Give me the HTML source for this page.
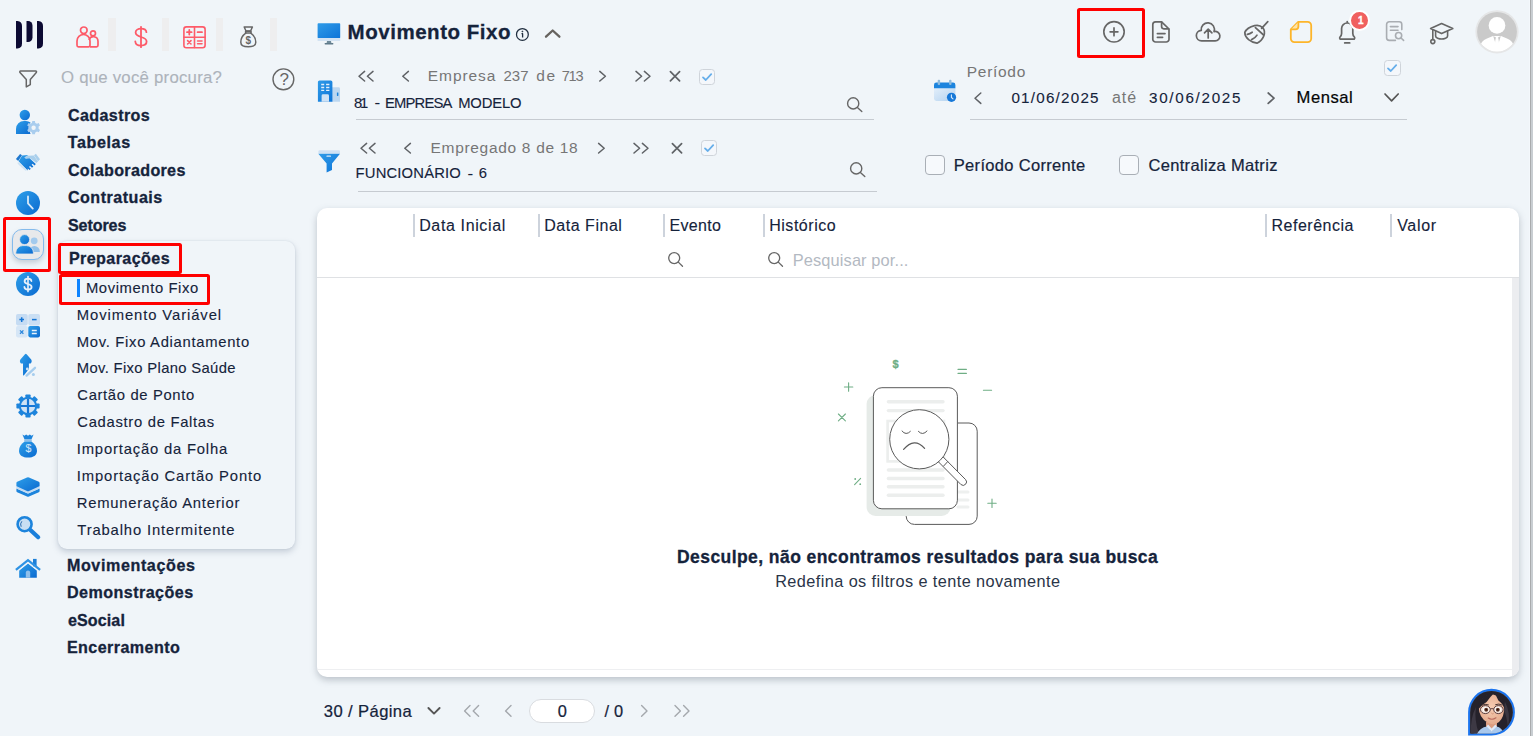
<!DOCTYPE html>
<html lang="pt-BR"><head>
<meta charset="utf-8">
<title>Movimento Fixo</title>
<style>
*{box-sizing:border-box;margin:0;padding:0}
html,body{width:1533px;height:736px;overflow:hidden}
body{background:#f0f5f9;font-family:"Liberation Sans",sans-serif;color:#15233b;position:relative}
.abs{position:absolute}
.t{position:absolute;white-space:nowrap;line-height:1;-webkit-text-stroke:0.12px currentColor}
.b{font-weight:700;-webkit-text-stroke:0.3px currentColor}
.navy{color:#15233b}
.grey{color:#767676;-webkit-text-stroke:0}
.ph{color:#adb3bb}
.m{-webkit-text-stroke:0.22px currentColor}
svg{position:absolute;overflow:visible}
.redbox{position:absolute;border:3px solid #ff0000;border-radius:2.5px}
.uline{position:absolute;height:1px;background:#c6cbd1}
.cb{position:absolute;width:16.6px;height:16.4px;border:1px solid #cfd4da;border-radius:3.5px;background:#f4f7fb}
.cb2{position:absolute;width:20px;height:20px;border:1px solid #a9afb6;border-radius:4px;background:#f6f9fc}
.sep{position:absolute;width:2px;height:23px;top:214px;background:#cdd3dc}
</style>
</head>
<body>
<!-- ===== logo ===== -->
<svg style="left:16px;top:21px" width="28" height="28" viewBox="0 0 28 28">
  <path d="M0 0 H1.5 A5 5 0 0 1 6 5 V22.5 A5 5 0 0 1 1.5 27.5 H0 Z" fill="#0c0a33"></path>
  <path d="M10.5 0 H12 A4.5 4.5 0 0 1 16.5 4.5 V16.5 A4.5 4.5 0 0 1 12 21 H10.5 Z" fill="#0c0a33"></path>
  <path d="M21 0 H22.5 A5 5 0 0 1 27 5 V22.5 A5 5 0 0 1 22.5 27.5 H21 Z" fill="#0c0a33"></path>
</svg>

<!-- ===== top module icons ===== -->
<div class="abs" style="left:108px;top:18px;width:8px;height:33px;background:#eeeeef"></div>
<div class="abs" style="left:162px;top:18px;width:7px;height:33px;background:#eeeeef"></div>
<div class="abs" style="left:216px;top:18px;width:7px;height:33px;background:#eeeeef"></div>
<div class="abs" style="left:270px;top:18px;width:7px;height:33px;background:#eeeeef"></div>

<!-- people (red outline) -->
<svg style="left:76px;top:26px" width="23" height="22" viewBox="0 0 23 22" fill="none" stroke="#fd5b69" stroke-width="1.7" stroke-linejoin="round">
  <circle cx="7.8" cy="4.3" r="3.3"></circle>
  <path d="M1 19.3 V15 A6.5 6.5 0 0 1 14 15 V19.3 A1.5 1.5 0 0 1 12.5 20.8 H2.5 A1.5 1.5 0 0 1 1 19.3 Z"></path>
  <circle cx="17" cy="7.3" r="2.5"></circle>
  <path d="M13 14 A4.6 4.6 0 0 1 22 15.2 V19.3 A1.5 1.5 0 0 1 20.5 20.8 H14"></path>
</svg>
<!-- dollar -->
<svg style="left:133px;top:25px" width="16" height="24" viewBox="0 0 16 24" fill="none" stroke="#fd5b69" stroke-width="1.8" stroke-linecap="round">
  <path d="M8 1.8 V22.2"></path>
  <path d="M13.4 7.2 C13.2 4.6 10.8 3.6 8 3.6 C5 3.6 2.6 5 2.6 7.6 C2.6 10.4 5.2 11.2 8 12 C11 12.8 13.6 13.7 13.6 16.6 C13.6 19.3 11 20.6 8 20.6 C4.9 20.6 2.5 19.3 2.3 16.5"></path>
</svg>
<!-- calculator -->
<svg style="left:183px;top:26px" width="23" height="23" viewBox="0 0 23 23" fill="none" stroke="#fd5b69" stroke-width="1.6" stroke-linecap="round">
  <rect x="0.9" y="0.9" width="21.2" height="20.8" rx="2.5"></rect>
  <path d="M11.5 1 V21.5 M1 11.3 H22"></path>
  <path d="M4 6.2 H8.6 M6.3 3.9 V8.5" stroke-width="1.8"></path>
  <path d="M14.6 6.2 H19" stroke-width="1.8"></path>
  <path d="M4.6 14.6 L8 18 M8 14.6 L4.6 18" stroke-width="1.6"></path>
  <path d="M14.6 15 H19 M14.6 17.8 H19" stroke-width="1.6"></path>
</svg>
<!-- money bag (grey outline) -->
<svg style="left:239px;top:26px" width="19" height="22" viewBox="0 0 19 22" fill="none" stroke="#666" stroke-width="1.5" stroke-linejoin="round" stroke-linecap="round">
  <path d="M5.2 1 H13.4 L11.6 5 H7 Z"></path>
  <path d="M6.6 5.2 H12 V7 H6.6 Z"></path>
  <path d="M6.8 7.2 C3.4 9.6 1.8 13 1.8 16.2 C1.8 19.4 4 20.8 9.3 20.8 C14.6 20.8 16.8 19.4 16.8 16.2 C16.8 13 15.2 9.6 11.8 7.2"></path>
</svg>
<span class="t b" style="font-size: 10px; color: rgb(102, 102, 102); -webkit-text-stroke: 0px; left: 245.6px; top: 35.9px;">$</span>

<!-- filter funnel + help -->
<svg style="left:19px;top:70px" width="19" height="18" viewBox="0 0 19 18" fill="none" stroke="#666" stroke-width="1.5" stroke-linejoin="round">
  <path d="M1.6 0.9 H16.6 A0.9 0.9 0 0 1 17.3 2.4 L11.3 9.4 V14.6 L7.3 16.9 V9.4 L1 2.4 A0.9 0.9 0 0 1 1.6 0.9 Z"></path>
</svg>
<span class="t ph" style="font-size: 16.8px; left: 61px; letter-spacing: 0.229px; top: 69.7px;">O que você procura?</span>
<svg style="left:272px;top:68px" width="23" height="23" viewBox="0 0 23 23" fill="none" stroke="#666" stroke-width="1.4">
  <circle cx="11.4" cy="11.3" r="10.4"></circle>
</svg>
<span class="t" style="font-size: 17px; color: rgb(102, 102, 102); -webkit-text-stroke: 0px; left: 279.4px; top: 71.2px;">?</span>
<!-- ===== left blue icon column ===== -->
<svg width="0" height="0" style="left:0;top:0">
  <defs>
    <linearGradient id="gb" x1="0" y1="0" x2="1" y2="1">
      <stop offset="0" stop-color="#2e9fe9"></stop>
      <stop offset="1" stop-color="#0b6ad0"></stop>
    </linearGradient>
    <linearGradient id="gl" x1="0" y1="0" x2="1" y2="1">
      <stop offset="0" stop-color="#d6e6f6"></stop>
      <stop offset="1" stop-color="#9ec6ec"></stop>
    </linearGradient>
  </defs>
</svg>

<!-- user + cog -->
<svg style="left:15px;top:109px" width="26" height="26" viewBox="0 0 26 26">
  <circle cx="9.8" cy="6" r="5.2" fill="url(#gb)"></circle>
  <path d="M1 25 V20 A8 8 0 0 1 9 12 H11 A8 8 0 0 1 15.5 13.6 L13.5 19 L15.5 25 Z" fill="url(#gb)"></path>
  <g transform="translate(18.6,18.7)">
    <path d="M-1.3 -6.6 H1.3 L1.7 -4.8 L3.4 -3.9 L5.1 -4.6 L6.4 -2.3 L5 -1.1 V1.1 L6.4 2.3 L5.1 4.6 L3.4 3.9 L1.7 4.8 L1.3 6.6 H-1.3 L-1.7 4.8 L-3.4 3.9 L-5.1 4.6 L-6.4 2.3 L-5 1.1 V-1.1 L-6.4 -2.3 L-5.1 -4.6 L-3.4 -3.9 L-1.7 -4.8 Z" fill="#a9cdee"></path>
    <circle r="2.2" fill="#f0f5f9"></circle>
  </g>
</svg>

<!-- handshake -->
<svg style="left:15px;top:153px" width="26" height="19" viewBox="0 0 26 19">
  <path d="M0.9 6 L5.1 1 L7 2.2 L3.2 8 Z" fill="#1f78cf"></path>
  <path d="M19 2.2 L20.9 0.8 L25 6.3 L23 8.2 Z" fill="#a9cfec"></path>
  <path d="M9.6 4.4 L12.4 2.8 L18.8 2.6 L23 8.4 L21.4 10 L14.8 5 L12 5.6 Q10.2 5.8 9.6 4.4 Z" fill="#a9cfec"></path>
  <path d="M7.2 2.6 L13.4 1.9 Q11 3 9.4 4.4 Q10.4 5.8 12.2 5.6 L14.6 5.2 L20.8 11 L19.6 12.4 L17.6 10.8 L16.6 11.8 L18.4 13.4 L17 14.8 L15 13 L14 14 L15.8 15.8 L14.6 17 L12.8 15.6 L12.6 17.6 L3.6 8.2 Z" fill="url(#gb)"></path>
  <path d="M3.4 10.2 L5 11.8 M5.6 12.2 L7.2 13.8 M7.8 14.2 L9.2 15.6 M9.8 15.8 L10.8 16.8" stroke="#cfe3f4" stroke-width="1.7" stroke-linecap="round"></path>
</svg>

<!-- clock -->
<svg style="left:16px;top:191px" width="24" height="24" viewBox="0 0 24 24">
  <circle cx="12" cy="12" r="12" fill="url(#gb)"></circle>
  <path d="M12 5.4 V12.4 L16.8 17.6" fill="none" stroke="#d9e9f8" stroke-width="1.8" stroke-linecap="round" stroke-linejoin="round"></path>
</svg>

<!-- selected tile: people -->
<div class="abs" style="left:12px;top:229px;width:32px;height:31px;border-radius:10px;background:#e8e9eb;border:1px solid #84bbec;box-shadow:0 3px 5px rgba(120,135,155,.35)"></div>
<svg style="left:15px;top:233px" width="26" height="22" viewBox="0 0 26 22">
  <circle cx="19.2" cy="7.8" r="3.4" fill="#a3caed"></circle>
  <path d="M14 19 V18.4 A5.4 5.4 0 0 1 24.8 18.4 V19 Z" fill="#93c1ea"></path>
  <circle cx="9.6" cy="6.6" r="5" fill="url(#gb)" stroke="#e8e9eb" stroke-width="0.8"></circle>
  <path d="M0.8 21 V19.6 A7 7 0 0 1 7.8 12.6 H11.4 A7 7 0 0 1 18.4 19.6 V21 Z" fill="url(#gb)" stroke="#e8e9eb" stroke-width="0.8"></path>
</svg>
<div class="redbox" style="left:3px;top:217px;width:48px;height:55px"></div>

<!-- dollar circle -->
<svg style="left:16px;top:272px" width="24" height="24" viewBox="0 0 24 24">
  <circle cx="12" cy="12" r="12" fill="url(#gb)"></circle>
  <path d="M12 4.6 V19.6" stroke="#e6f0fa" stroke-width="1.6" stroke-linecap="round"></path>
  <path d="M15.4 9 C15.2 7.4 13.8 6.7 12 6.7 C10 6.7 8.6 7.6 8.6 9.2 C8.6 11 10.2 11.5 12 12 C14 12.5 15.6 13.2 15.6 15 C15.6 16.7 14 17.5 12 17.5 C10 17.5 8.5 16.7 8.4 15" fill="none" stroke="#e6f0fa" stroke-width="1.8" stroke-linecap="round"></path>
</svg>

<!-- calculator tiles -->
<svg style="left:16px;top:314px" width="24" height="24" viewBox="0 0 24 24">
  <rect x="0" y="0" width="11.7" height="11.4" rx="1.8" fill="#c6dcf3"></rect>
  <rect x="12.3" y="0" width="11.7" height="11.4" rx="1.8" fill="#cadff4"></rect>
  <rect x="0" y="12" width="11.7" height="11.4" rx="1.8" fill="#d6e6f6"></rect>
  <rect x="12.3" y="12" width="11.7" height="11.4" rx="1.8" fill="url(#gb)"></rect>
  <path d="M3.4 5.6 H8 M5.7 3.3 V7.9" stroke="#1576d6" stroke-width="1.5"></path>
  <path d="M16 5.6 H20.6" stroke="#1576d6" stroke-width="1.5"></path>
  <path d="M4 16.4 L7.4 19.8 M7.4 16.4 L4 19.8" stroke="#2a86dc" stroke-width="1.3"></path>
  <path d="M15.8 16.6 H20.8 M15.8 19.6 H20.8" stroke="#e8f1fb" stroke-width="1.5"></path>
</svg>

<!-- arrow up + percent -->
<svg style="left:19px;top:353px" width="18" height="24" viewBox="0 0 18 24">
  <path d="M6 1.2 Q6.8 0.4 7.6 1.2 L12.2 6.6 Q13.2 8 12.4 9.4 Q11.8 10.6 10.4 10.6 H9.9 V16 L4.8 22.4 Q4 22.8 4 21.8 V10.6 H3.2 Q1.8 10.6 1.2 9.4 Q0.4 8 1.4 6.6 Z" fill="url(#gb)"></path>
  <path d="M7.6 22.6 L16 14.8" stroke="#a6cdee" stroke-width="2.3" stroke-linecap="round"></path>
  <circle cx="8.3" cy="16" r="1.4" fill="#cfe3f4"></circle>
  <circle cx="14.4" cy="21.5" r="1.5" fill="#a6cdee"></circle>
</svg>

<!-- gear with cross -->
<svg style="left:16px;top:394.4px" width="24" height="24" viewBox="-12 -12 24 24">
  <g fill="#1d84dc">
    <circle r="9.2"></circle>
    <g id="tooth"><rect x="-2.6" y="-11.6" width="5.2" height="5" rx="0.8"></rect></g>
    <use href="#tooth" transform="rotate(45)"></use>
    <use href="#tooth" transform="rotate(90)"></use>
    <use href="#tooth" transform="rotate(135)"></use>
    <use href="#tooth" transform="rotate(180)"></use>
    <use href="#tooth" transform="rotate(225)"></use>
    <use href="#tooth" transform="rotate(270)"></use>
    <use href="#tooth" transform="rotate(315)"></use>
  </g>
  <circle r="7.2" fill="#cfe2f5"></circle>
  <path d="M0 -7.4 V7.4 M-7.4 0 H7.4" stroke="#1576d6" stroke-width="2.2"></path>
</svg>

<!-- money bag solid -->
<svg style="left:19px;top:434px" width="18" height="24" viewBox="0 0 18 24">
  <path d="M3.4 0.6 L5.4 1.8 L7.2 0.4 L9 1.8 L10.8 0.4 L12.6 1.8 L14.6 0.6 L12.4 5.4 H5.6 Z" fill="#1d84dc"></path>
  <rect x="5.2" y="5.6" width="7.6" height="1.8" fill="#8fbfea"></rect>
  <path d="M5.6 7.6 H12.4 C16 10 18 13.4 18 16.8 C18 21.4 14.4 23.6 9 23.6 C3.6 23.6 0 21.4 0 16.8 C0 13.4 2 10 5.6 7.6 Z" fill="url(#gb)"></path>
</svg>
<span class="t" style="font-size: 10.5px; color: rgb(207, 228, 248); left: 25.4px; top: 443px;">$</span>

<!-- layers -->
<svg style="left:16px;top:477px" width="24" height="20" viewBox="0 0 24 20">
  <path d="M0.4 11.6 L11 16.2 Q12 16.6 13 16.2 L23.6 11.6 V14 Q23.6 14.8 22.8 15.2 L13 19.6 Q12 20 11 19.6 L1.2 15.2 Q0.4 14.8 0.4 14 Z" fill="#1d84dc"></path>
  <path d="M0.4 8.4 L11 13 Q12 13.4 13 13 L23.6 8.4 V11.4 L13 16 Q12 16.4 11 16 L0.4 11.4 Z" fill="#c3dbf2"></path>
  <path d="M11 0.4 Q12 0 13 0.4 L22.8 4.8 Q23.6 5.2 23.6 6 V8.4 Q23.6 9.2 22.8 9.6 L13 14 Q12 14.4 11 14 L1.2 9.6 Q0.4 9.2 0.4 8.4 V6 Q0.4 5.2 1.2 4.8 Z" fill="url(#gb)"></path>
</svg>

<!-- magnifier -->
<svg style="left:15px;top:515px" width="26" height="25" viewBox="0 0 26 25">
  <path d="M15.4 15 L23.2 22.2" stroke="#1a7fdb" stroke-width="4.2" stroke-linecap="round"></path>
  <circle cx="9.6" cy="9.2" r="7" fill="#c9def3" stroke="#1d84dc" stroke-width="2.6"></circle>
  <path d="M6 11.4 A4.4 4.4 0 0 1 6.6 6.6" fill="none" stroke="#2b6cb0" stroke-width="1" stroke-linecap="round"></path>
</svg>

<!-- house -->
<svg style="left:15px;top:558px" width="26" height="21" viewBox="0 0 26 21">
  <path d="M13 5.4 L21.8 12.4 V19.7 H4.2 V12.4 Z" fill="url(#gb)"></path>
  <path d="M1.6 11.4 L13 2.2 L24.4 11.4" fill="none" stroke="#f0f5f9" stroke-width="4.6" stroke-linejoin="miter"></path>
  <rect x="18" y="0.9" width="3.6" height="7.4" fill="#1c7fd8"></rect>
  <path d="M1.8 11.2 L13 2.2 L24.2 11.2" fill="none" stroke="#2f93e4" stroke-width="2.3" stroke-linejoin="miter" stroke-linecap="square"></path>
  <path d="M10.8 19.7 V14.6 A2.2 2.2 0 0 1 15.2 14.6 V19.7 Z" fill="#8fbfea"></path>
</svg>
<!-- ===== sidebar menu ===== -->
<span class="t b navy" style="font-size: 16.1px; left: 67.9px; letter-spacing: 0.393px; top: 107px;">Cadastros</span>
<span class="t b navy" style="font-size: 16.1px; left: 67.7px; letter-spacing: 0.618px; top: 134px;">Tabelas</span>
<span class="t b navy" style="font-size: 16.1px; left: 67.9px; letter-spacing: 0.323px; top: 162px;">Colaboradores</span>
<span class="t b navy" style="font-size: 16.1px; left: 67.9px; letter-spacing: 0.493px; top: 188.7px;">Contratuais</span>
<span class="t b navy" style="font-size: 16.1px; left: 67.9px; letter-spacing: -0.081px; top: 216.9px;">Setores</span>

<!-- expanded card -->
<div class="abs" style="left:58px;top:241px;width:237px;height:308px;border-radius:9px;background:#f0f5f9;box-shadow:0 3px 6px rgba(110,125,150,.32), 0 0 2px rgba(110,125,150,.18)"></div>
<span class="t b navy" style="font-size: 16.1px; left: 68.9px; letter-spacing: 0.413px; top: 249.8px;">Preparações</span>
<div class="redbox" style="left:58px;top:243px;width:124px;height:31px"></div>
<div class="abs" style="left:77px;top:279px;width:3px;height:18px;background:#0d84ff"></div>
<span class="t navy" style="font-size: 14.8px; left: 85.9px; letter-spacing: 0.608px; top: 280.7px;">Movimento Fixo</span>
<div class="redbox" style="left:59px;top:274px;width:151px;height:31px"></div>
<span class="t navy" style="font-size: 14.8px; left: 76.8px; letter-spacing: 0.909px; top: 307.8px;">Movimento Variável</span>
<span class="t navy" style="font-size: 14.8px; left: 76.8px; letter-spacing: 0.699px; top: 334.7px;">Mov. Fixo Adiantamento</span>
<span class="t navy" style="font-size: 14.8px; left: 76.8px; letter-spacing: 0.337px; top: 361.1px;">Mov. Fixo Plano Saúde</span>
<span class="t navy" style="font-size: 14.8px; left: 77.3px; letter-spacing: 0.655px; top: 387.7px;">Cartão de Ponto</span>
<span class="t navy" style="font-size: 14.8px; left: 77.3px; letter-spacing: 0.699px; top: 414.6px;">Cadastro de Faltas</span>
<span class="t navy" style="font-size: 14.8px; left: 76.8px; letter-spacing: 0.817px; top: 441.9px;">Importação da Folha</span>
<span class="t navy" style="font-size: 14.8px; left: 76.8px; letter-spacing: 0.868px; top: 468.6px;">Importação Cartão Ponto</span>
<span class="t navy" style="font-size: 14.8px; left: 76.8px; letter-spacing: 0.761px; top: 495.7px;">Remuneração Anterior</span>
<span class="t navy" style="font-size: 14.8px; left: 77.3px; letter-spacing: 0.857px; top: 522.8px;">Trabalho Intermitente</span>

<span class="t b navy" style="font-size: 16.1px; left: 66.9px; letter-spacing: 0.609px; top: 556.9px;">Movimentações</span>
<span class="t b navy" style="font-size: 16.1px; left: 66.9px; letter-spacing: 0.458px; top: 584px;">Demonstrações</span>
<span class="t b navy" style="font-size: 16.1px; left: 67.9px; letter-spacing: 0.102px; top: 611.7px;">eSocial</span>
<span class="t b navy" style="font-size: 16.1px; left: 66.9px; letter-spacing: 0.428px; top: 638.8px;">Encerramento</span>
<!-- ===== page title ===== -->
<svg style="left:317px;top:23px" width="24" height="22" viewBox="0 0 24 22">
  <defs><linearGradient id="gm" x1="0" y1="0" x2="1" y2="1"><stop offset="0" stop-color="#2f9be8"></stop><stop offset="1" stop-color="#0d74d8"></stop></linearGradient></defs>
  <rect x="0.6" y="0.2" width="22.6" height="15" rx="0.8" fill="url(#gm)"></rect>
  <rect x="0.6" y="15" width="22.6" height="3" fill="#d3e3f3"></rect>
  <path d="M10 18 H14 L14.4 20 H9.6 Z" fill="#6f8a99"></path>
  <rect x="7.6" y="20" width="8.8" height="1.4" rx="0.6" fill="#5f7a8a"></rect>
</svg>
<span class="t b navy" style="font-size: 20.5px; left: 347.6px; letter-spacing: 0.53px; top: 21.9px;">Movimento Fixo</span>
<svg style="left:515px;top:27px" width="15" height="15" viewBox="0 0 15 15" fill="none" stroke="#1f2d3e" stroke-width="1.25">
  <circle cx="7.4" cy="7.4" r="5.9"></circle>
  <path d="M6.5 6.7 H7.6 V10.6" stroke-width="1.3" stroke-linejoin="round"></path>
  <circle cx="7.4" cy="4.5" r="0.55" fill="#1f2d3e" stroke-width="0.6"></circle>
</svg>
<svg style="left:544px;top:28px" width="18" height="11" viewBox="0 0 18 11" fill="none" stroke="#66635f" stroke-width="2.3" stroke-linecap="round" stroke-linejoin="round">
  <path d="M2 8.7 L8.7 2.5 L15.4 8.7"></path>
</svg>

<!-- ===== Empresa row ===== -->
<svg style="left:317px;top:80px" width="24" height="22" viewBox="0 0 24 22">
  <path d="M15 7.2 H21.6 A1.4 1.4 0 0 1 23 8.6 V21.7 H15 Z" fill="#bdd7f0"></path>
  <rect x="19.9" y="12.4" width="1.5" height="3.6" rx="0.4" fill="#1d84dc"></rect>
  <path d="M0.9 2 A1.6 1.6 0 0 1 2.5 0.4 H13.8 A1.6 1.6 0 0 1 15.4 2 V21.7 H0.9 Z" fill="url(#gm)"></path>
  <path d="M4.2 4.5 H7.2 M9.1 4.5 H12.4 M4.2 7.5 H7.2 M9.1 7.5 H12.4 M4.2 10.4 H7.2 M9.1 10.4 H12.4" stroke="#e3effa" stroke-width="1.3"></path>
  <path d="M4.6 21.7 V15.7 A1.4 1.4 0 0 1 6 14.3 H10.6 A1.4 1.4 0 0 1 12 15.7 V21.7 Z" fill="#cfe2f5"></path>
</svg>

<!-- nav chevrons row 1 (y 71..81) -->
<svg style="left:357px;top:70px" width="360" height="13" viewBox="0 0 360 13" fill="none" stroke="#5f6266" stroke-width="1.5" stroke-linecap="round" stroke-linejoin="round">
  <path d="M7.6 1.4 L2 6.2 L7.6 11"></path>
  <path d="M16 1.4 L10.4 6.2 L16 11"></path>
  <path d="M51.4 1.4 L45.8 6.2 L51.4 11"></path>
  <path d="M242.8 1.4 L248.4 6.2 L242.8 11"></path>
  <path d="M279 1.4 L284.6 6.2 L279 11"></path>
  <path d="M287.4 1.4 L293 6.2 L287.4 11"></path>
  <path d="M313.4 1.6 L322.6 10.8 M322.6 1.6 L313.4 10.8" stroke-width="1.7"></path>
</svg>
<span class="t grey" style="font-size: 15.5px; left: 427.8px; letter-spacing: 0.916px; top: 68.2px;">Empresa</span>
<span class="t grey" style="font-size: 15px; left: 503.4px; letter-spacing: 0.108px; top: 68.2px;">237</span>
<span class="t grey" style="font-size: 15.5px; left: 536.2px; letter-spacing: 1.78px; top: 68.2px;">de</span>
<span class="t grey" style="font-size: 14.6px; left: 561.8px; letter-spacing: -1.316px; top: 69.2px;">713</span>
<div class="cb" style="left:698.5px;top:69px"></div>
<svg style="left:698.5px;top:69px" width="16" height="16" viewBox="0 0 16 16" fill="none" stroke="#66aeea" stroke-width="1.8" stroke-linecap="round" stroke-linejoin="round"><path d="M4 8.4 L6.8 11 L12.2 5.2"></path></svg>
<span class="t navy" style="font-size: 14.8px; left: 354px; letter-spacing: -2.229px; top: 95.7px;">81</span>
<span class="t navy" style="font-size: 17px; left: 374.4px; top: 94.2px;">-</span>
<span class="t navy" style="font-size: 14.8px; left: 385px; letter-spacing: -0.832px; top: 95.7px;">EMPRESA</span>
<span class="t navy" style="font-size: 14.8px; left: 458.2px; letter-spacing: -0.164px; top: 95.7px;">MODELO</span>
<svg style="left:846px;top:96px" width="18" height="18" viewBox="0 0 18 18" fill="none" stroke="#666" stroke-width="1.4" stroke-linecap="round"><circle cx="7.2" cy="7.4" r="5.6"></circle><path d="M11.4 11.6 L15.8 15.6"></path></svg>
<div class="uline" style="left:356px;top:119px;width:518px"></div>

<!-- ===== Empregado row ===== -->
<svg style="left:318px;top:150px" width="23" height="23" viewBox="0 0 23 23">
  <path d="M0.4 1.4 A1.2 1.2 0 0 1 1.6 0.2 H20.8 A1.2 1.2 0 0 1 22 1.4 V3.6 H0.4 Z" fill="#cfe1f4"></path>
  <path d="M0.3 3.8 H22 L14 13.4 V20 L8.6 22.6 V13.4 Z" fill="url(#gm)"></path>
  <rect x="8.4" y="5.4" width="4.6" height="1.4" rx="0.6" fill="#dbe9f7"></rect>
</svg>
<svg style="left:359px;top:141.5px" width="360" height="13" viewBox="0 0 360 13" fill="none" stroke="#5f6266" stroke-width="1.5" stroke-linecap="round" stroke-linejoin="round">
  <path d="M7.6 1.4 L2 6.2 L7.6 11"></path>
  <path d="M16 1.4 L10.4 6.2 L16 11"></path>
  <path d="M51.4 1.4 L45.8 6.2 L51.4 11"></path>
  <path d="M239.6 1.4 L245.2 6.2 L239.6 11"></path>
  <path d="M275 1.4 L280.6 6.2 L275 11"></path>
  <path d="M283.4 1.4 L289 6.2 L283.4 11"></path>
  <path d="M313.4 1.6 L322.6 10.8 M322.6 1.6 L313.4 10.8" stroke-width="1.7"></path>
</svg>
<span class="t grey" style="font-size: 15.5px; left: 430.5px; letter-spacing: 0.692px; top: 140px;">Empregado 8 de 18</span>
<div class="cb" style="left:700.5px;top:140px"></div>
<svg style="left:700.5px;top:140px" width="16" height="16" viewBox="0 0 16 16" fill="none" stroke="#66aeea" stroke-width="1.8" stroke-linecap="round" stroke-linejoin="round"><path d="M4 8.4 L6.8 11 L12.2 5.2"></path></svg>
<span class="t navy" style="font-size: 14.8px; left: 355.6px; letter-spacing: 0.163px; top: 166.4px;">FUNCIONÁRIO</span>
<span class="t navy" style="font-size: 17px; left: 467.6px; top: 164.9px;">-</span>
<span class="t navy" style="font-size: 14.8px; left: 478.8px; top: 166.4px;">6</span>
<svg style="left:849px;top:161px" width="18" height="18" viewBox="0 0 18 18" fill="none" stroke="#666" stroke-width="1.4" stroke-linecap="round"><circle cx="7.2" cy="7.4" r="5.6"></circle><path d="M11.4 11.6 L15.8 15.6"></path></svg>
<div class="uline" style="left:358px;top:191px;width:519px"></div>
<!-- ===== Período ===== -->
<span class="t grey" style="font-size: 15.5px; left: 966.8px; letter-spacing: 0.705px; top: 63.9px;">Período</span>
<svg style="left:934px;top:80px" width="23" height="23" viewBox="0 0 23 23">
  <defs><linearGradient id="gc" x1="0" y1="0" x2="1" y2="1"><stop offset="0" stop-color="#e2eefa"></stop><stop offset="1" stop-color="#b3d2ef"></stop></linearGradient></defs>
  <path d="M0 8 H21.4 V18.6 A2.4 2.4 0 0 1 19 21 H2.4 A2.4 2.4 0 0 1 0 18.6 Z" fill="url(#gc)"></path>
  <path d="M0 5 A2.4 2.4 0 0 1 2.4 2.6 H19 A2.4 2.4 0 0 1 21.4 5 V8.2 H0 Z" fill="#1c84de"></path>
  <rect x="3.7" y="-0.2" width="2.4" height="5.2" rx="1" fill="#8fbadc"></rect>
  <rect x="15.1" y="-0.2" width="2.4" height="5.2" rx="1" fill="#8fbadc"></rect>
  <circle cx="17.5" cy="17.3" r="4.6" fill="#1678d8"></circle>
  <path d="M17.4 14.8 V17.5 L19 18.9" fill="none" stroke="#d9e9f8" stroke-width="1.1" stroke-linecap="round"></path>
</svg>
<svg style="left:973px;top:92px" width="10" height="13" viewBox="0 0 10 13" fill="none" stroke="#5f6266" stroke-width="1.5" stroke-linecap="round" stroke-linejoin="round"><path d="M7.8 1 L2 6.2 L7.8 11.4"></path></svg>
<span class="t navy" style="font-size: 15.2px; left: 1011.4px; letter-spacing: 1.237px; top: 90.4px;">01/06/2025</span>
<span class="t grey" style="font-size: 16px; left: 1112px; letter-spacing: 0.928px; top: 90.1px;">até</span>
<span class="t navy" style="font-size: 15.2px; left: 1149px; letter-spacing: 1.715px; top: 90.4px;">30/06/2025</span>
<svg style="left:1266px;top:92px" width="10" height="13" viewBox="0 0 10 13" fill="none" stroke="#5f6266" stroke-width="1.7" stroke-linecap="round" stroke-linejoin="round"><path d="M2.2 1 L8 6.2 L2.2 11.4"></path></svg>
<span class="t m" style="font-size: 16.6px; color: rgb(5, 5, 5); left: 1296.6px; letter-spacing: 0.539px; top: 89.9px;">Mensal</span>
<svg style="left:1383px;top:92px" width="17" height="11" viewBox="0 0 17 11" fill="none" stroke="#555" stroke-width="1.7" stroke-linecap="round" stroke-linejoin="round"><path d="M2 2 L8.6 8.8 L15.2 2"></path></svg>
<div class="cb" style="left:1384px;top:59.5px"></div>
<svg style="left:1384px;top:59.5px" width="16" height="16" viewBox="0 0 16 16" fill="none" stroke="#66aeea" stroke-width="1.8" stroke-linecap="round" stroke-linejoin="round"><path d="M4 8.4 L6.8 11 L12.2 5.2"></path></svg>
<div class="uline" style="left:970px;top:119px;width:437px"></div>

<div class="cb2" style="left:925px;top:155px"></div>
<span class="t navy m" style="font-size: 16.5px; left: 953.8px; letter-spacing: 0.32px; top: 156.9px;">Período Corrente</span>
<div class="cb2" style="left:1119px;top:155px"></div>
<span class="t navy m" style="font-size: 16.5px; left: 1148.4px; letter-spacing: 0.329px; top: 156.9px;">Centraliza Matriz</span>
<!-- ===== top-right toolbar ===== -->
<div class="redbox" style="left:1077px;top:8px;width:68px;height:50px"></div>
<svg style="left:1102px;top:20px" width="24" height="24" viewBox="0 0 24 24" fill="none" stroke="#666" stroke-width="1.6" stroke-linecap="round">
  <circle cx="12" cy="11.8" r="10.2"></circle>
  <path d="M8.1 11.8 H15.9 M12 7.9 V15.7" stroke-width="1.7"></path>
</svg>
<!-- document -->
<svg style="left:1151px;top:20px" width="20" height="24" viewBox="0 0 20 24" fill="none" stroke="#666" stroke-width="1.7" stroke-linecap="round" stroke-linejoin="round">
  <path d="M4.6 1.8 H10.6 L18 9 V19.2 A2.8 2.8 0 0 1 15.2 22 H4.6 A2.8 2.8 0 0 1 1.8 19.2 V4.6 A2.8 2.8 0 0 1 4.6 1.8 Z"></path>
  <path d="M10.6 2 V6.6 A2.2 2.2 0 0 0 12.8 8.8 H17.6"></path>
  <path d="M6.4 13.6 H14 M6.4 17.3 H11.6"></path>
</svg>
<!-- cloud upload -->
<svg style="left:1195px;top:21px" width="27" height="22" viewBox="0 0 27 22" fill="none" stroke="#666" stroke-width="1.7" stroke-linecap="round" stroke-linejoin="round">
  <path d="M6.6 19.85 H20 A4.7 4.7 0 1 0 19.03 10.6 A6.6 6.6 0 1 0 6.27 9.36 A5.25 5.25 0 0 0 6.6 19.85 Z"></path>
  <path d="M13.2 17 V8.6 M9.5 11.9 L13.2 8.2 L16.9 11.9"></path>
</svg>
<!-- broom -->
<svg style="left:1243px;top:20px" width="27" height="25" viewBox="0 0 27 25" fill="none" stroke="#666" stroke-width="1.7" stroke-linecap="round" stroke-linejoin="round">
  <path d="M24.8 1.6 L18.6 8.4"></path>
  <path d="M11.6 5.6 Q16.6 4.4 19.6 7.6 Q22.8 11 20.6 16.4 Q18.4 21.4 14 23.2 Q9.6 22.8 5.6 19.6 Q1.8 16.2 1.8 12.4 Q4 7.4 11.6 5.6 Z"></path>
  <path d="M12.4 7.6 L20.6 15"></path>
  <path d="M4.4 14.4 Q7 13.8 9.2 12.2"></path>
  <path d="M8.6 19.6 Q12.4 18 14 15.2"></path>
</svg>
<!-- yellow note -->
<svg style="left:1289px;top:20px" width="24" height="24" viewBox="0 0 24 24" fill="none" stroke="#fdb52a" stroke-width="1.8" stroke-linejoin="round">
  <path d="M1.8 9.4 L9.2 1.8 H18.6 A3.6 3.6 0 0 1 22.2 5.4 V18.6 A3.6 3.6 0 0 1 18.6 22.2 H5.4 A3.6 3.6 0 0 1 1.8 18.6 Z"></path>
  <path d="M9.4 2 V6.6 A2.8 2.8 0 0 1 6.6 9.4 H2" fill="#fde3a8"></path>
</svg>
<!-- bell -->
<svg style="left:1338px;top:20px" width="19" height="25" viewBox="0 0 19 25" fill="none" stroke="#666" stroke-width="1.7" stroke-linecap="round" stroke-linejoin="round">
  <path d="M9.2 1.6 V3 A5.6 5.6 0 0 1 14.8 8.6 V13.4 Q14.8 15.4 16.4 17 Q17.2 18 16.2 19.2 H2.2 Q1.2 18 2 17 Q3.6 15.4 3.6 13.4 V8.6 A5.6 5.6 0 0 1 9.2 3"></path>
  <path d="M6.8 22.9 H11.6" stroke-width="1.9"></path>
</svg>
<div class="abs" style="left:1349.2px;top:10px;width:20.8px;height:20.8px;border-radius:50%;background:#f0605f;border:2px solid #fff"></div>
<span class="t b" style="font-size: 10px; color: rgb(255, 255, 255); left: 1358px; top: 15.7px;">1</span>
<!-- doc search (disabled) -->
<svg style="left:1385px;top:20px" width="20" height="22" viewBox="0 0 20 22" fill="none" stroke="#a9adb2" stroke-width="1.6" stroke-linecap="round" stroke-linejoin="round">
  <path d="M10.4 20.4 H4.2 A2.6 2.6 0 0 1 1.6 17.8 V4.4 A2.6 2.6 0 0 1 4.2 1.8 H14.2 A2.6 2.6 0 0 1 16.8 4.4 V9.6"></path>
  <path d="M5.4 6.6 H13 M5.4 10.2 H13"></path>
  <circle cx="13.6" cy="15.6" r="3.1"></circle>
  <path d="M16 18 L18.6 20.4"></path>
</svg>
<!-- graduation cap -->
<svg style="left:1429px;top:22px" width="26" height="23" viewBox="0 0 26 23" fill="none" stroke="#666" stroke-width="1.6" stroke-linecap="round" stroke-linejoin="round">
  <path d="M1.6 6.6 L12.6 1.6 L23.8 6.6 L12.6 11.6 Z"></path>
  <path d="M6.6 9 V14 Q6.6 15.4 8.6 16.2 Q12.6 17.8 16.6 16.2 Q18.6 15.4 18.6 14 V9"></path>
  <path d="M3.8 7.8 V17.4"></path>
  <circle cx="3.8" cy="19.6" r="2"></circle>
</svg>
<!-- avatar -->
<svg style="left:1475px;top:10px" width="44" height="44" viewBox="0 0 44 44">
  <defs><clipPath id="avc"><circle cx="22" cy="21.8" r="19.9"></circle></clipPath></defs>
  <circle cx="22" cy="21.8" r="21.6" fill="#e5e6e7"></circle>
  <circle cx="22" cy="21.8" r="19.9" fill="#cacaca"></circle>
  <g clip-path="url(#avc)">
    <circle cx="22" cy="15.4" r="8.35" fill="#fff"></circle>
    <path d="M5 44 V38 Q5.4 31 12 28.6 L18 26 H26 L32 28.6 Q38.6 31 39 38 V44 Z" fill="#fff"></path>
    <path d="M18.2 26 L20.2 32.6 L21 27.6 Z M25.8 26 L23.8 32.6 L23 27.6 Z" fill="#cacaca"></path>
    <path d="M21 27.2 H23 L23.6 31.8 L22 34 L20.4 31.8 Z" fill="#fff"></path>
  </g>
</svg>
<!-- ===== table card ===== -->
<div class="abs" style="left:317px;top:208px;width:1202px;height:469px;border-radius:10px;background:#fff;box-shadow:0 3px 7px rgba(95,105,118,.36);overflow:hidden">
  <div class="abs" style="left:0;top:69px;width:1202px;height:1px;background:#dfe1e4"></div>
  <div class="abs" style="left:1195px;top:70px;width:7px;height:399px;background:#ecedf0"></div>
  <div class="abs" style="left:0;top:461px;width:1195px;height:1px;background:#eeeff1"></div>
</div>
<div class="sep" style="left:413px"></div>
<div class="sep" style="left:538.3px"></div>
<div class="sep" style="left:663.4px"></div>
<div class="sep" style="left:763.4px"></div>
<div class="sep" style="left:1265.2px"></div>
<div class="sep" style="left:1390.2px"></div>
<span class="t navy" style="font-size: 16px; left: 419.2px; letter-spacing: 0.628px; top: 217.9px;">Data Inicial</span>
<span class="t navy" style="font-size: 16px; left: 544.3px; letter-spacing: 0.515px; top: 217.9px;">Data Final</span>
<span class="t navy" style="font-size: 16px; left: 669.6px; letter-spacing: 0.297px; top: 217.9px;">Evento</span>
<span class="t navy" style="font-size: 16px; left: 769.2px; letter-spacing: 0.533px; top: 217.9px;">Histórico</span>
<span class="t navy" style="font-size: 16px; left: 1271.5px; letter-spacing: 0.514px; top: 217.9px;">Referência</span>
<span class="t navy" style="font-size: 16px; left: 1397.2px; letter-spacing: 0.691px; top: 217.9px;">Valor</span>
<svg style="left:667px;top:251.2px" width="18" height="18" viewBox="0 0 18 18" fill="none" stroke="#666" stroke-width="1.3" stroke-linecap="round"><circle cx="7.2" cy="7.1" r="5.5"></circle><path d="M11.3 11.1 L15.5 15.2"></path></svg>
<svg style="left:767px;top:251.2px" width="18" height="18" viewBox="0 0 18 18" fill="none" stroke="#666" stroke-width="1.3" stroke-linecap="round"><circle cx="7.2" cy="7.1" r="5.5"></circle><path d="M11.3 11.1 L15.5 15.2"></path></svg>
<span class="t" style="font-size: 16.4px; color: rgb(179, 185, 194); -webkit-text-stroke: 0px; left: 792.8px; letter-spacing: 0.111px; top: 251.7px;">Pesquisar por...</span>

<!-- ===== empty state illustration ===== -->
<svg style="left:830px;top:350px" width="180" height="180" viewBox="830 350 180 180" fill="none">
  <!-- back doc -->
  <path d="M957.5 423 H969 A8.2 8.2 0 0 1 977.2 431.2 V516.2 A8.2 8.2 0 0 1 969 524.4 H914.4 A8.2 8.2 0 0 1 906.2 516.2 V509" fill="#fff" stroke="#5a5a5a" stroke-width="1"></path>
  <path d="M958 492 H968 M958 500 H968 M958 507 H968" stroke="#eef0ef" stroke-width="3" stroke-linecap="round"></path>
  <!-- shadow of front doc -->
  <rect x="866.6" y="395" width="84" height="121" rx="9" fill="#e6ebe8"></rect>
  <!-- front doc -->
  <rect x="873.4" y="387.7" width="84" height="121.1" rx="8.5" fill="#fff" stroke="#5a5a5a" stroke-width="1"></rect>
  <g stroke="#eceeed" stroke-width="3.4" stroke-linecap="round">
    <path d="M888.4 401.8 H943"></path>
    <path d="M888.4 410.6 H943"></path>
    <path d="M888.4 470 H943"></path>
    <path d="M888.4 478.5 H943"></path>
    <path d="M888.4 486.8 H943"></path>
    <path d="M888.4 495.2 H943"></path>
  </g>
  <rect x="887.6" y="421" width="56.4" height="40.4" fill="none" stroke="#eceeed" stroke-width="2.6"></rect>
  <!-- magnifier handle -->
  <path d="M937.5 460.9 L960.9 484.5 A3.4 3.4 0 0 0 965.6 479.6 L942.1 455.9 Z" fill="#fff" stroke="#5a5a5a" stroke-width="1" stroke-linejoin="round"></path>
  <path d="M943.3 466.4 L947.9 461.4" stroke="#5a5a5a" stroke-width="1"></path>
  <!-- lens -->
  <circle cx="919.3" cy="439.3" r="29.6" fill="#fff" stroke="#5a5a5a" stroke-width="1"></circle>
  <!-- face -->
  <path d="M902 431 Q906 436 910.4 431.4" stroke="#5a5a5a" stroke-width="1" stroke-linecap="round"></path>
  <path d="M918.4 431.4 Q922.6 436 927 431" stroke="#5a5a5a" stroke-width="1" stroke-linecap="round"></path>
  <path d="M903.6 449.4 Q914.4 436.8 924.6 448.4" stroke="#5a5a5a" stroke-width="1.2" stroke-linecap="round"></path>
  <!-- green math signs -->
  <g stroke="#6fae85" stroke-width="1.1" stroke-linecap="round">
    <path d="M844.4 387 H852.8 M848.6 382.8 V391.2"></path>
    <path d="M958 369.4 H966.4 M958 373.4 H966.4"></path>
    <path d="M983.4 390.2 H991.6"></path>
    <path d="M838.4 414 L845.4 420.8 M845.4 414 L838.4 420.8"></path>
    <path d="M987.8 503.2 H996.2 M992 499 V507.4"></path>
    <path d="M854.6 484.6 L860.6 478.4"></path>
  </g>
  <circle cx="855.2" cy="479" r="0.9" fill="#6fae85"></circle>
  <circle cx="860.2" cy="484.2" r="0.9" fill="#6fae85"></circle>
</svg>
<span class="t b" style="font-size: 11px; color: rgb(111, 174, 133); left: 892.4px; top: 359.4px;">$</span>

<span class="t b navy" style="font-size: 17.5px; left: 677px; letter-spacing: 0.434px; top: 549.2px;">Desculpe, não encontramos resultados para sua busca</span>
<span class="t" style="font-size: 16.3px; color: rgb(42, 53, 72); -webkit-text-stroke: 0px; left: 775.2px; letter-spacing: 0.418px; top: 573.3px;">Redefina os filtros e tente novamente</span>
<!-- ===== pagination ===== -->
<span class="t navy m" style="font-size: 16.6px; left: 323.8px; letter-spacing: 0.397px; top: 703.7px;">30 / Página</span>
<svg style="left:426px;top:705px" width="16" height="11" viewBox="0 0 16 11" fill="none" stroke="#555" stroke-width="1.9" stroke-linecap="round" stroke-linejoin="round"><path d="M2.4 3 L8 8.6 L13.6 3"></path></svg>
<svg style="left:463px;top:704px" width="230" height="14" viewBox="0 0 230 14" fill="none" stroke="#a4a8ad" stroke-width="1.4" stroke-linecap="round" stroke-linejoin="round">
  <path d="M7 1.6 L1.6 6.9 L7 12.2"></path>
  <path d="M15.6 1.6 L10.2 6.9 L15.6 12.2"></path>
  <path d="M48 1.6 L42.6 6.9 L48 12.2"></path>
  <path d="M178.6 1.6 L184 6.9 L178.6 12.2"></path>
  <path d="M212 1.6 L217.4 6.9 L212 12.2"></path>
  <path d="M220.6 1.6 L226 6.9 L220.6 12.2"></path>
</svg>
<div class="abs" style="left:529px;top:699px;width:66px;height:24px;border-radius:12px;background:#fff;border:1px solid #d9dce0"></div>
<span class="t navy m" style="font-size: 16.4px; left: 557.8px; top: 702.7px;">0</span>
<span class="t navy m" style="font-size: 16.4px; left: 604.6px; letter-spacing: 0.096px; top: 702.7px;">/ 0</span>

<!-- ===== chat assistant avatar ===== -->
<svg style="left:1467px;top:688px" width="49" height="48" viewBox="0 0 49 48">
  <defs>
    <clipPath id="chc"><path d="M3.2 24.2 A21.3 21.3 0 1 1 24.5 45.5 H3.2 Z"></path></clipPath>
    <radialGradient id="skin" cx="0.5" cy="0.45" r="0.6"><stop offset="0" stop-color="#f6cdb3"></stop><stop offset="1" stop-color="#e3a88a"></stop></radialGradient>
  </defs>
  <path d="M1.1 24.2 A23.4 23.4 0 1 1 24.5 47.6 H1.1 Z" fill="#1b74ee"></path>
  <g clip-path="url(#chc)">
    <rect x="0" y="0" width="49" height="48" fill="#6d6a70"></rect>
    <!-- hair mass -->
    <path d="M2 48 V20 Q5 3 24 2.4 Q40 3 45 16 Q48 28 45 38 L42 47 L30 42 L10 44 Z" fill="#25222b"></path>
    <path d="M4 46 Q3 30 9 19 Q7 32 12 46 Z" fill="#3d3944"></path>
    <path d="M38 14 Q44 24 41 40 Q40 28 36 20 Z" fill="#3a3640"></path>
    <!-- neck + shirt -->
    <path d="M19 34 H30 V42 H19 Z" fill="#dc9d80"></path>
    <path d="M9 48 Q12 39.6 20 38.4 L24.6 43 L29.4 38.4 Q36 39.6 37.6 48 Z" fill="#a9c8ec"></path>
    <path d="M19.6 38.6 L24.6 43.6 L29.8 38.6 L28.4 36.6 L24.6 40.6 L21 36.6 Z" fill="#dfeaf8"></path>
    <!-- face -->
    <path d="M11.8 20 Q12.4 9 24.6 6 Q36 8.6 37 20 Q37.4 29 32 34 Q26.4 38.4 20.4 34.6 Q12 29.4 11.8 20 Z" fill="url(#skin)"></path>
    <!-- fringe -->
    <path d="M10.6 22 Q11 8 27.6 4.6 Q22.6 9.6 19.6 14 Q15 16.4 10.6 22 Z" fill="#25222b"></path>
    <path d="M27.6 4.6 Q37.6 7.6 38 21 Q35 15 31.4 12.6 Q29 8 27.6 4.6 Z" fill="#25222b"></path>
    <!-- brows -->
    <path d="M14.8 17.2 Q18 15.4 21.4 16.8 M28.6 16.6 Q32 15.2 35 17" stroke="#3a2a2a" stroke-width="0.9" fill="none" stroke-linecap="round"></path>
    <!-- glasses + eyes -->
    <ellipse cx="18.4" cy="21.6" rx="4.9" ry="4" fill="#f5e3d8" stroke="#4a2f33" stroke-width="0.9"></ellipse>
    <ellipse cx="31.4" cy="21.6" rx="4.7" ry="4" fill="#f5e3d8" stroke="#4a2f33" stroke-width="0.9"></ellipse>
    <path d="M23.3 21 Q24.9 20.2 26.7 21" stroke="#4a2f33" stroke-width="0.9" fill="none"></path>
    <ellipse cx="18.8" cy="21.6" rx="3" ry="2.6" fill="#fff"></ellipse>
    <ellipse cx="31" cy="21.6" rx="3" ry="2.6" fill="#fff"></ellipse>
    <circle cx="19.2" cy="21.7" r="2" fill="#6a3a28"></circle>
    <circle cx="30.8" cy="21.7" r="2" fill="#6a3a28"></circle>
    <circle cx="19.2" cy="21.7" r="0.9" fill="#20120e"></circle>
    <circle cx="30.8" cy="21.7" r="0.9" fill="#20120e"></circle>
    <!-- nose + mouth -->
    <path d="M24.4 25 Q25.4 27.4 26.6 25.4" stroke="#cf8d72" stroke-width="0.8" fill="none" stroke-linecap="round"></path>
    <path d="M21.2 30 Q25 32.6 29 29.8" stroke="#b86a5c" stroke-width="1.1" fill="none" stroke-linecap="round"></path>
  </g>
</svg>

<!-- ===== right window edge ===== -->
<div class="abs" style="left:1529px;top:0;width:1px;height:736px;background:#f4f8fc"></div>
<div class="abs" style="left:1530px;top:0;width:1px;height:736px;background:#a9abad"></div>
<div class="abs" style="left:1531px;top:0;width:2px;height:736px;background:#c9ced2"></div>



</body></html>
